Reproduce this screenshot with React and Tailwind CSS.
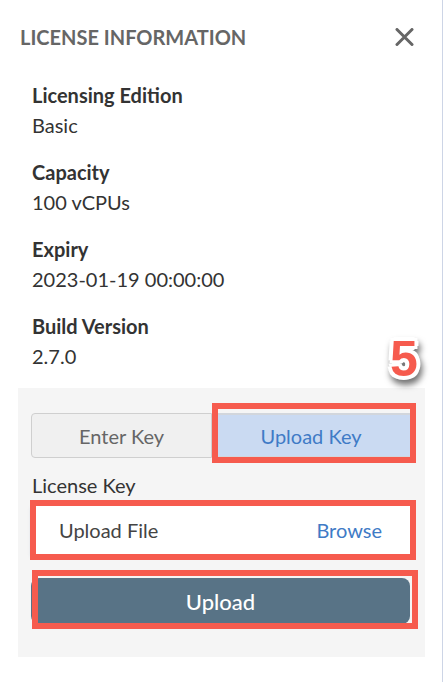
import React from 'react';

const items = [
  { label: 'Licensing Edition', value: 'Basic' },
  { label: 'Capacity', value: '100 vCPUs' },
  { label: 'Expiry', value: '2023-01-19 00:00:00' },
  { label: 'Build Version', value: '2.7.0' },
];

function CloseIcon() {
  return (
    <svg width="19" height="18" viewBox="0 0 19 18" fill="none">
      <path d="M2 1.5L17 16.5M17 1.5L2 16.5" stroke="#666" strokeWidth="3" strokeLinecap="round" />
    </svg>
  );
}

export default function App() {
  return (
    <div className="relative flex w-[444px] h-[682px] bg-white text-[#333] font-['Lato','Liberation_Sans',sans-serif]">
      <div className="w-[442px] px-[18px] pr-[17px] pt-[24px]">
        {/* Header */}
        <div className="flex items-center justify-between pl-[2px] pr-[11px] h-[26px]">
          <h2 className="text-[20px] leading-[26px] font-bold uppercase text-[#666]">License Information</h2>
          <button className="flex items-center justify-center">
            <CloseIcon />
          </button>
        </div>

        {/* Details */}
        <div className="mt-[32px] pl-[14px] flex flex-col gap-[21px]">
          {items.map((it) => (
            <div key={it.label} className="flex flex-col gap-[4px]">
              <div className="text-[20px] leading-[26px] font-bold text-[#333]">{it.label}</div>
              <div className="text-[20px] leading-[26px] text-[#333]">{it.value}</div>
            </div>
          ))}
        </div>

        {/* Key panel */}
        <div className="mt-[19px] bg-[#f5f5f5] pl-[13px] pr-[15px] pt-[25px] pb-[33px]">
          <div className="flex h-[45px] text-[20px]">
            <button className="w-[181px] rounded-l-[4px] border border-[#cfcfcf] bg-[#f0f0f0] text-[#666]">
              Enter Key
            </button>
            <button className="flex-1 border-t-[2px] border-b-[2px] border-[#d2d6dc] bg-[#cadaf2] text-[#3f7bc6]">
              Upload Key
            </button>
          </div>

          <div className="mt-[15px] pl-[1px] text-[20px] leading-[24px] text-[#333]">License Key</div>

          <div className="mt-[9px] flex h-[48px] items-center justify-between bg-white px-[28px] text-[20px] shadow-[0_2px_3px_rgba(120,140,180,0.35)]">
            <span className="text-[#444]">Upload File</span>
            <span className="text-[#3f7bc6]">Browse</span>
          </div>

          <button className="mt-[24px] flex h-[46px] w-full items-center justify-center rounded-[8px] bg-[#587386] text-[22px] font-medium text-white">
            Upload
          </button>
        </div>
      </div>
      <div className="w-px h-full bg-[#cdd5e6]" />

      {/* Annotation overlays */}
      <div className="pointer-events-none absolute left-[212px] top-[403px] w-[204px] h-[60px] border-[6px] border-[#f65b4e]" />
      <div className="pointer-events-none absolute left-[30px] top-[500px] w-[386px] h-[60px] border-[6px] border-[#f65b4e]" />
      <div className="pointer-events-none absolute left-[32px] top-[570px] w-[386px] h-[59px] border-[6px] border-[#f65b4e]" />
      <div className="pointer-events-none absolute left-[390px] top-[330px] drop-shadow-[2px_5px_3px_rgba(0,0,0,0.55)]">
        <span className="block text-[50px] leading-[58px] font-black text-[#f65b4e] font-['Liberation_Sans',sans-serif] [text-shadow:-3px_-3px_0_#fff,3px_-3px_0_#fff,-3px_3px_0_#fff,3px_3px_0_#fff,0_-4px_0_#fff,0_4px_0_#fff,-4px_0_0_#fff,4px_0_0_#fff]">
          5
        </span>
      </div>
    </div>
  );
}
